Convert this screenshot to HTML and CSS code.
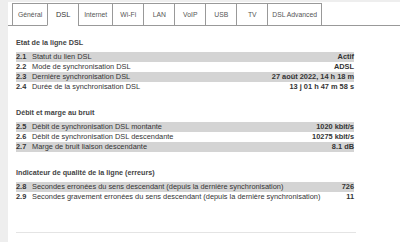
FILE: index.html
```html
<!DOCTYPE html>
<html lang="fr">
<head>
    <meta charset="UTF-8">
    <title>DSL</title>
    <link rel="stylesheet" href="styles.css">
</head>
<body>
<div class="page">
    <div class="tabs">
        <a class="tab">Général</a>
        <a class="tab active">DSL</a>
        <a class="tab">Internet</a>
        <a class="tab">Wi-Fi</a>
        <a class="tab">LAN</a>
        <a class="tab">VoIP</a>
        <a class="tab">USB</a>
        <a class="tab">TV</a>
        <a class="tab">DSL Advanced</a>
    </div>

    <div class="content">
        <div class="section">
            <h2>Etat de la ligne DSL</h2>
            <div class="row shaded"><span class="num">2.1</span><span class="label">Statut du lien DSL</span><span class="value">Actif</span></div>
            <div class="row"><span class="num">2.2</span><span class="label">Mode de synchronisation DSL</span><span class="value">ADSL</span></div>
            <div class="row shaded"><span class="num">2.3</span><span class="label">Dernière synchronisation DSL</span><span class="value">27 août 2022, 14 h 18 m</span></div>
            <div class="row"><span class="num">2.4</span><span class="label">Durée de la synchronisation DSL</span><span class="value">13 j 01 h 47 m 58 s</span></div>
        </div>

        <div class="section">
            <h2>Débit et marge au bruit</h2>
            <div class="row shaded"><span class="num">2.5</span><span class="label">Débit de synchronisation DSL montante</span><span class="value">1020 kbit/s</span></div>
            <div class="row"><span class="num">2.6</span><span class="label">Débit de synchronisation DSL descendante</span><span class="value">10275 kbit/s</span></div>
            <div class="row shaded"><span class="num">2.7</span><span class="label">Marge de bruit liaison descendante</span><span class="value">8.1 dB</span></div>
        </div>

        <div class="section">
            <h2>Indicateur de qualité de la ligne (erreurs)</h2>
            <div class="row shaded"><span class="num">2.8</span><span class="label">Secondes erronées du sens descendant (depuis la dernière synchronisation)</span><span class="value">726</span></div>
            <div class="row"><span class="num">2.9</span><span class="label">Secondes gravement erronées du sens descendant (depuis la dernière synchronisation)</span><span class="value">11</span></div>
        </div>

        <div class="footer-line"></div>
    </div>
</div>
</body>
</html>
```

FILE: styles.css
```css
body {
    margin: 0;
    background-color: #eeeeee;
    font-family: "Liberation Sans", Arial, sans-serif;
    color: #333;
}
.page {
    margin: 2px 0 0 8px;
    background-color: #fff;
    height: 240px;
}
.tabs {
    display: flex;
    padding: 1px 0 0 4px;
    border-bottom: 1px solid #999;
}
.tab {
    display: block;
    min-width: 20px;
    height: 21px;
    line-height: 21px;
    padding: 0 5px;
    margin-bottom: -1px;
    border: 1px solid #999;
    border-right: none;
    background-color: #fff;
    font-size: 6.8px;
    text-align: center;
    color: #555;
}
.tab:last-child {
    border-right: 1px solid #999;
    padding: 0 4px;
}
.tab.active {
    border-bottom-color: #fff;
    font-size: 7.4px;
    color: #333;
}
.content {
    width: 340px;
    padding: 12px 0 0 8px;
}
.section {
    width: 338px;
    margin-bottom: 16px;
}
h2 {
    margin: 0 0 4px 0;
    font-size: 7.2px;
    line-height: 10px;
    font-weight: bold;
    color: #444;
}
.row {
    display: flex;
    height: 10px;
    line-height: 10px;
    font-size: 7.4px;
    color: #333;
}
.row.shaded {
    background-color: #d4d4d4;
}
.num {
    width: 16px;
    font-weight: bold;
}
.label {
    flex: 1;
    white-space: nowrap;
}
.value {
    font-weight: bold;
    text-align: right;
    white-space: nowrap;
}
.footer-line {
    margin-top: 30px;
    height: 1px;
    background-color: #e4e4e4;
}
```
